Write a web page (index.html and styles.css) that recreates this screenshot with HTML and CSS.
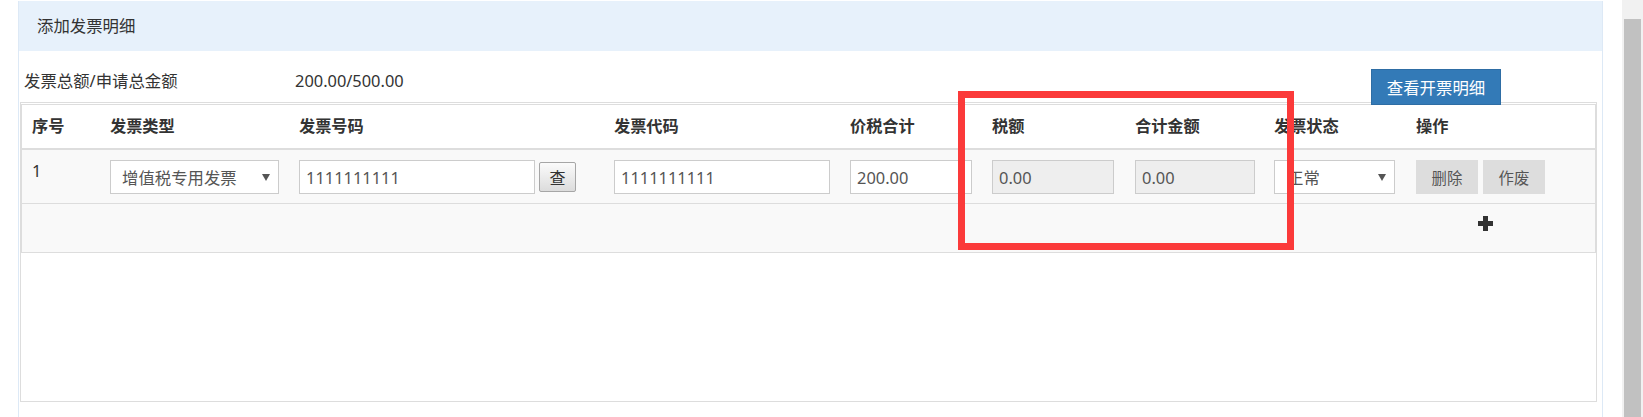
FILE: index.html
```html
<!DOCTYPE html>
<html lang="zh-CN">
<head>
<meta charset="utf-8">
<title>添加发票明细</title>
<link rel="stylesheet" href="styles.css">
</head>
<body>
<div class="page">
  <div class="panel">
    <div class="panel-heading">添加发票明细</div>
    <div class="summary">
      <span class="summary-label">发票总额/申请总金额</span>
      <span class="summary-value">200.00/500.00</span>
      <button class="btn-primary" type="button">查看开票明细</button>
    </div>
    <div class="table-box">
      <table class="invoice-table">
        <colgroup>
          <col class="c-no"><col class="c-type"><col class="c-num"><col class="c-code"><col class="c-sum"><col class="c-tax"><col class="c-total"><col class="c-status"><col class="c-op">
        </colgroup>
        <thead>
          <tr>
            <th>序号</th><th>发票类型</th><th>发票号码</th><th>发票代码</th><th>价税合计</th><th>税额</th><th>合计金额</th><th>发票状态</th><th>操作</th>
          </tr>
        </thead>
        <tbody>
          <tr class="row">
            <td class="cell-no">1</td>
            <td><span class="select-wrap w-type"><select class="select"><option>增值税专用发票</option></select></span></td>
            <td><div class="with-btn"><input class="input w-num" type="text" value="1111111111"><button class="btn-query" type="button">查</button></div></td>
            <td><input class="input w-code" type="text" value="1111111111"></td>
            <td><input class="input w-sum" type="text" value="200.00"></td>
            <td><input class="input w-tax" type="text" value="0.00" disabled></td>
            <td><input class="input w-total" type="text" value="0.00" disabled></td>
            <td><span class="select-wrap w-status"><select class="select"><option>正常</option></select></span></td>
            <td><div class="actions"><button class="btn-gray" type="button">删除</button><button class="btn-gray" type="button">作废</button></div></td>
          </tr>
          <tr class="add-row">
            <td colspan="8"></td>
            <td><svg class="plus" width="15" height="15" viewBox="0 0 15 15"><rect x="0" y="5" width="15" height="5" fill="#333"/><rect x="5" y="0" width="5" height="15" fill="#333"/></svg></td>
          </tr>
        </tbody>
      </table>
    </div>
  </div>
  <div class="annotation"></div>
</div>
<div class="scrollbar"><div class="thumb"></div></div>
</body>
</html>
```

FILE: styles.css
```css
* { box-sizing: border-box; }

html, body {
  margin: 0;
  padding: 0;
  height: 417px;
  overflow: hidden;
  background: #fff;
}

body {
  display: flex;
  font-family: "Noto Sans", "Noto Sans CJK SC", sans-serif;
  font-size: 16.4px;
  color: #333;
}

.page {
  position: relative;
  width: 1622px;
  flex: none;
  padding-top: 1px;
}

.panel {
  margin-left: 18px;
  width: 1585px;
  height: 416px;
  border: 1px solid #dde9f6;
  border-top: none;
  border-bottom: none;
}

.panel-heading {
  height: 50px;
  line-height: 50px;
  padding-left: 18px;
  background: #e7f1fb;
  color: #333;
}

.summary {
  display: flex;
  align-items: flex-start;
  padding: 18px 0 0 5px;
  margin-bottom: -3px;
}

.summary-label {
  width: 271px;
  line-height: 22px;
  margin-top: 1px;
}

.summary-value {
  line-height: 22px;
  margin-top: 1px;
}

.btn-primary {
  position: relative;
  z-index: 1;
  margin-left: auto;
  margin-right: 101px;
  width: 130px;
  height: 36px;
  background: #337ab7;
  border: 1px solid #2e6da4;
  border-radius: 0;
  color: #fff;
  font-family: inherit;
  font-size: 16.4px;
  padding: 0;
}

.table-box {
  margin: 0 5px 0 1px;
  height: 300px;
  border: 1px solid #ddd;
  padding-top: 1px;
}

.invoice-table {
  width: 100%;
  table-layout: fixed;
  border-collapse: separate;
  border-spacing: 0;
  border: 1px solid #ddd;
}

.c-no { width: 78px; }
.c-type { width: 189px; }
.c-num { width: 315px; }
.c-code { width: 236px; }
.c-sum { width: 142px; }
.c-tax { width: 143px; }
.c-total { width: 139px; }
.c-status { width: 142px; }
.c-op { width: 189px; }

.invoice-table th {
  text-align: left;
  font-weight: bold;
  font-size: 16.2px;
  padding: 0 0 0 10px;
  line-height: 43px;
  border-bottom: 2px solid #ddd;
  background: #fff;
  white-space: nowrap;
}

.invoice-table td {
  padding: 10px 0 9px 10px;
  vertical-align: top;
  background: #f9f9f9;
  white-space: nowrap;
}

.row td {
  border-bottom: 1px solid #ddd;
}

.cell-no {
  line-height: 22px;
}

.add-row td {
  padding: 12px 0 21px 10px;
}

.plus {
  display: block;
  margin-left: 62px;
}

.input {
  display: block;
  height: 34px;
  border: 1px solid #ccc;
  background: #fff;
  color: #555;
  font-family: inherit;
  font-size: 16.4px;
  padding: 0 6px;
  margin: 0;
  outline: none;
  border-radius: 0;
}

.input:disabled {
  background: #eee;
  color: #555;
  -webkit-text-fill-color: #555;
  opacity: 1;
}

.w-num { width: 236px; }
.w-code { width: 216px; }
.w-sum { width: 122px; }
.w-tax { width: 122px; }
.w-total { width: 120px; }

.with-btn {
  display: flex;
  align-items: center;
  gap: 4px;
}

.btn-query {
  width: 37px;
  height: 30px;
  padding: 0;
  border: 1px solid #a6a6a6;
  border-radius: 2px;
  background: linear-gradient(#fbfbfb, #dcdcdc);
  color: #333;
  font-family: inherit;
  font-size: 16px;
}

.select-wrap {
  position: relative;
  display: block;
}

.select-wrap::after {
  content: "";
  position: absolute;
  top: 14px;
  right: 9px;
  border-left: 4px solid transparent;
  border-right: 4px solid transparent;
  border-top: 7px solid #555;
}

.select {
  -webkit-appearance: none;
  appearance: none;
  width: 100%;
  height: 34px;
  border: 1px solid #ccc;
  border-radius: 0;
  background: #fff;
  color: #555;
  font-family: inherit;
  font-size: 16.4px;
  padding: 0 0 0 11px;
  margin: 0;
  outline: none;
}

.w-type { width: 169px; }
.w-status { width: 121px; }
.w-status .select { padding-left: 12px; }

.actions {
  display: flex;
  gap: 5px;
}

.btn-gray {
  width: 62px;
  height: 34px;
  border: none;
  border-radius: 0;
  background: #ddd;
  color: #555;
  font-family: inherit;
  font-size: 15.4px;
  padding: 0;
}

.annotation {
  position: absolute;
  left: 958px;
  top: 91px;
  width: 336px;
  height: 159px;
  border: 7px solid #fb3a3a;
  z-index: 2;
  pointer-events: none;
}

.scrollbar {
  width: 21px;
  flex: none;
  background: #f1f1f1;
  padding: 19px 2px 0;
}

.thumb {
  height: 100%;
  background: #c1c1c1;
}
```
